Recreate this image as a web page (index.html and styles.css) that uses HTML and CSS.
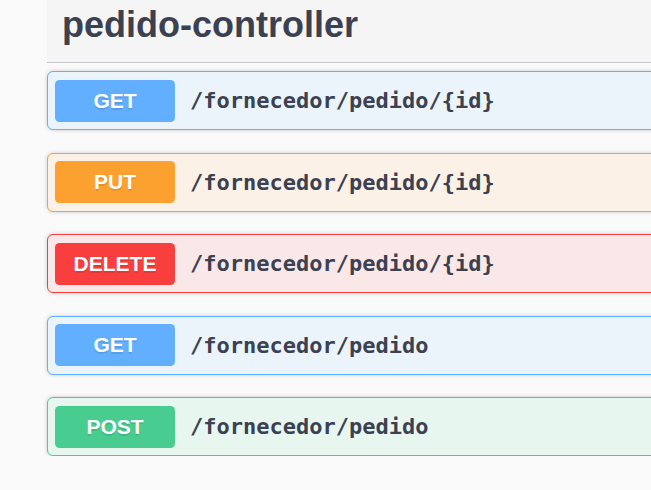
FILE: index.html
```html
<!DOCTYPE html>
<html lang="pt">
<head>
<meta charset="utf-8">
<title>pedido-controller</title>
<link rel="stylesheet" href="styles.css">
</head>
<body>
<div class="page">
  <section class="tag-section">
    <h3 class="tag">pedido-controller</h3>
    <div class="ops">
      <div class="op op-get">
        <span class="method">GET</span>
        <span class="path">/fornecedor/pedido/{id}</span>
      </div>
      <div class="op op-put">
        <span class="method">PUT</span>
        <span class="path">/fornecedor/pedido/{id}</span>
      </div>
      <div class="op op-delete">
        <span class="method">DELETE</span>
        <span class="path">/fornecedor/pedido/{id}</span>
      </div>
      <div class="op op-get">
        <span class="method">GET</span>
        <span class="path">/fornecedor/pedido</span>
      </div>
      <div class="op op-post">
        <span class="method">POST</span>
        <span class="path">/fornecedor/pedido</span>
      </div>
    </div>
  </section>
</div>
</body>
</html>
```

FILE: styles.css
```css
html, body {
  margin: 0;
  padding: 0;
  background: #fafafa;
  overflow: hidden;
}

.page {
  padding-left: 47px;
  width: 1000px;
  font-family: "Liberation Sans", Arial, sans-serif;
  color: #3b4151;
}

.tag {
  margin: 0 0 8px;
  padding: 4px 30px 17px 15px;
  line-height: 41px;
  font-size: 36px;
  font-weight: 700;
  color: #3b4151;
  background: #f5f5f5;
  border-bottom: 1px solid #c4c6cb;
}

.ops {
  display: flex;
  flex-direction: column;
  gap: 22.5px;
}

.op {
  display: flex;
  align-items: center;
  padding: 7.5px 7px;
  border: 1px solid;
  border-radius: 6px;
  box-shadow: 0 0 4px rgba(0, 0, 0, 0.19);
}

.method {
  min-width: 120px;
  padding: 9px 0;
  line-height: 24px;
  font-size: 21px;
  font-weight: 700;
  text-align: center;
  color: #fff;
  border-radius: 4.5px;
  text-shadow: 0 1.5px 0 rgba(0, 0, 0, 0.1);
}

.path {
  padding: 0 15px;
  font-family: "DejaVu Sans Mono", "Liberation Mono", monospace;
  font-size: 22px;
  font-weight: 700;
  color: #3b4151;
}

.op-get { border-color: #61affe; background: #ebf3fb; }
.op-get .method { background: #61affe; }

.op-put { border-color: #fca130; background: #fcf1e6; }
.op-put .method { background: #fca130; }

.op-delete { border-color: #f93e3e; background: #fae7e7; }
.op-delete .method { background: #f93e3e; }

.op-post { border-color: #49cc90; background: #e8f6f0; }
.op-post .method { background: #49cc90; }
```
